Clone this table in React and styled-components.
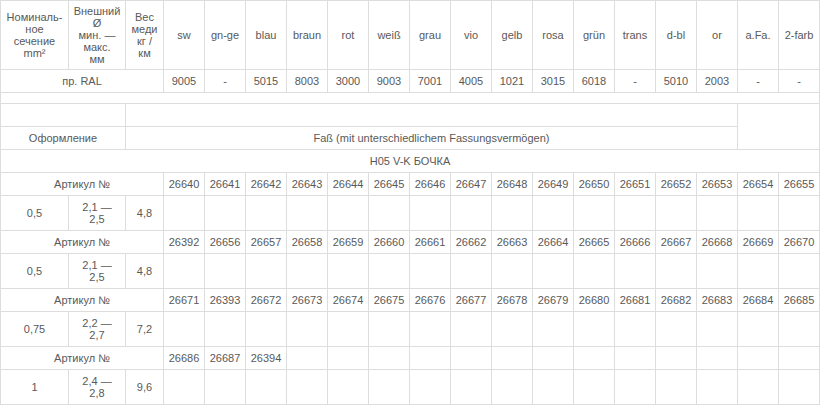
import styled, { createGlobalStyle } from 'styled-components';

const colors = ['sw', 'gn-ge', 'blau', 'braun', 'rot', 'weiß', 'grau', 'vio', 'gelb', 'rosa', 'grün', 'trans', 'd-bl', 'or', 'a.Fa.', '2-farb'];
const ral = ['9005', '-', '5015', '8003', '3000', '9003', '7001', '4005', '1021', '3015', '6018', '-', '5010', '2003', '-', '-'];

const range = (from, n) => Array.from({ length: n }, (_, i) => String(from + i));

const groups = [
  { arts: ['26640', ...range(26641, 15)], section: '0,5', dia: ['2,1 —', '2,5'], weight: '4,8' },
  { arts: ['26392', ...range(26656, 15)], section: '0,5', dia: ['2,1 —', '2,5'], weight: '4,8' },
  { arts: ['26671', '26393', ...range(26672, 14)], section: '0,75', dia: ['2,2 —', '2,7'], weight: '7,2' },
  { arts: ['26686', '26687', '26394'], section: '1', dia: ['2,4 —', '2,8'], weight: '9,6' },
];

const GlobalStyle = createGlobalStyle`
  body {
    margin: 0;
    background: #fff;
    font-family: "Liberation Sans", Arial, sans-serif;
  }
`;

const Table = styled.table`
  border-collapse: collapse;
  table-layout: fixed;
  width: 819px;
  font-size: 11px;
  color: #595959;
`;

const Col = styled.col`
  width: ${(p) => p.$w}px;
`;

const Th = styled.th`
  font-weight: normal;
  border: 1px solid #ddd;
  padding: 4px;
  line-height: 12px;
  text-align: center;
  vertical-align: middle;
`;

const Td = styled.td`
  border: 1px solid #ddd;
  padding: 5px 4px;
  line-height: 12px;
  text-align: center;
  vertical-align: middle;
  white-space: nowrap;
`;

const SpacerCell = styled.td`
  border: 1px solid #ddd;
  padding: 5px 0;
  height: 0;
  line-height: 0;
`;

const Blank = () => <>&nbsp;</>;

export default function App() {
  return (
    <>
      <GlobalStyle />
      <Table>
        <colgroup>
          <Col $w={68} />
          <Col $w={57} />
          <Col $w={38} />
          {colors.map((c) => (
            <Col key={c} $w={41} />
          ))}
        </colgroup>
        <tbody>
          <tr>
            <Th>Номиналь-<br />ное<br />сечение<br />mm²</Th>
            <Th>Внешний<br />Ø<br />мин. —<br />макс.<br />мм</Th>
            <Th>Вес<br />меди<br />кг /<br />км</Th>
            {colors.map((c) => (
              <Th key={c}>{c}</Th>
            ))}
          </tr>
          <tr>
            <Td colSpan={3}>пр. RAL</Td>
            {ral.map((r, i) => (
              <Td key={i}>{r}</Td>
            ))}
          </tr>
          <tr>
            <SpacerCell colSpan={19} />
          </tr>
          <tr>
            <Td colSpan={2}><Blank /></Td>
            <Td colSpan={15}><Blank /></Td>
            <Td colSpan={2} rowSpan={2}><Blank /></Td>
          </tr>
          <tr>
            <Td colSpan={2}>Оформление</Td>
            <Td colSpan={15}>Faß (mit unterschiedlichem Fassungsvermögen)</Td>
          </tr>
          <tr>
            <Td colSpan={19}>H05 V-K БОЧКА</Td>
          </tr>
          {groups.map((g, gi) => (
            <GroupRows key={gi} group={g} />
          ))}
        </tbody>
      </Table>
    </>
  );
}

function GroupRows({ group }) {
  const cells = Array.from({ length: 16 }, (_, i) => group.arts[i] || '');
  return (
    <>
      <tr>
        <Td colSpan={3}>Артикул №</Td>
        {cells.map((a, i) => (
          <Td key={i}>{a || <Blank />}</Td>
        ))}
      </tr>
      <tr>
        <Td>{group.section}</Td>
        <Td>
          {group.dia[0]}
          <br />
          {group.dia[1]}
        </Td>
        <Td>{group.weight}</Td>
        {cells.map((_, i) => (
          <Td key={i} />
        ))}
      </tr>
    </>
  );
}
